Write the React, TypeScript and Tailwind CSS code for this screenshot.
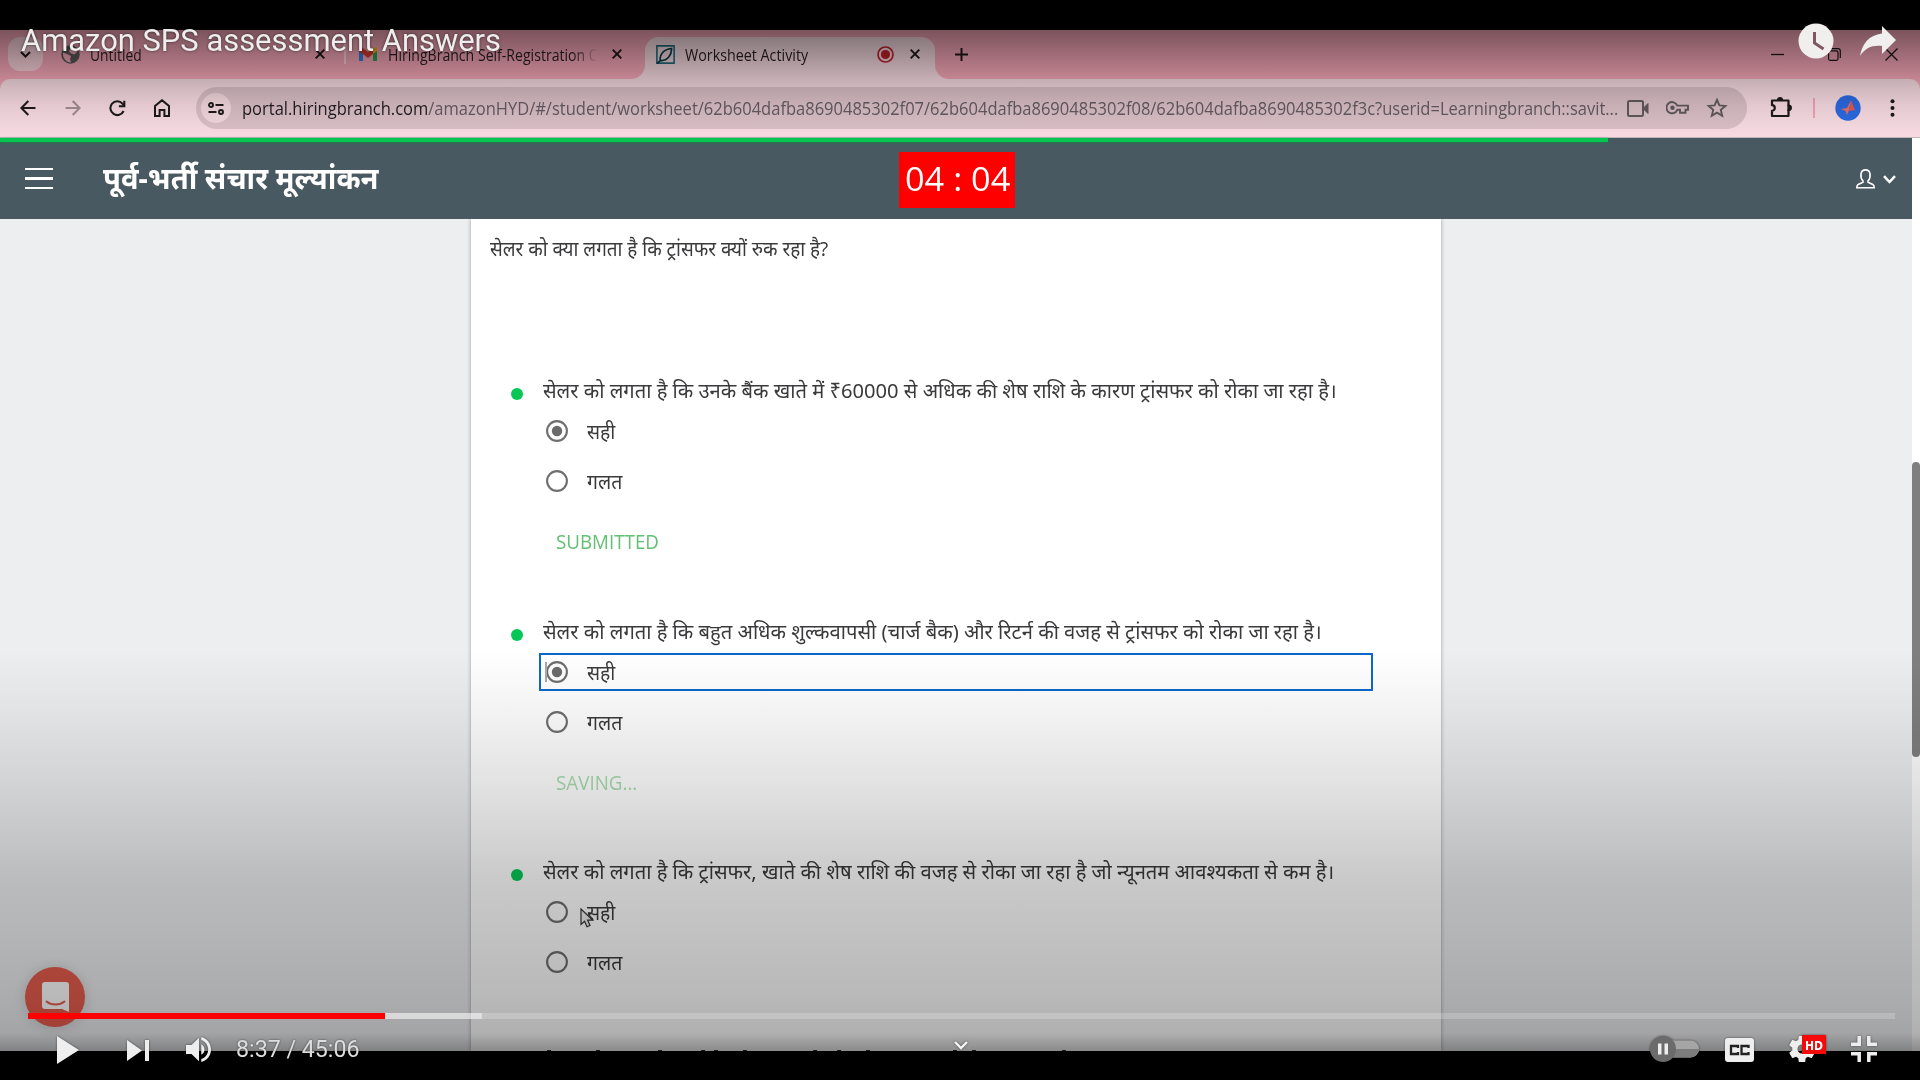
import { useLayoutEffect, useRef, useState } from "react";
import type { ReactNode } from "react";

/* One line of text stretched to a fixed advance width. */
function Fit({ w, className = "", children }: { w: number; className?: string; children: ReactNode }) {
  const ref = useRef<HTMLSpanElement>(null);
  const [scale, setScale] = useState(1);
  useLayoutEffect(() => {
    if (ref.current) setScale(w / ref.current.offsetWidth);
  }, [w]);
  return (
    <span className="block shrink-0" style={{ width: w }}>
      <span
        ref={ref}
        className={`inline-block origin-left whitespace-nowrap ${className}`}
        style={{ transform: `scaleX(${scale})` }}
      >
        {children}
      </span>
    </span>
  );
}

function Close({ className = "" }: { className?: string }) {
  return (
    <svg className={`size-[10px] shrink-0 ${className}`} viewBox="0 0 10 10" fill="none" stroke="#1d1518" strokeWidth="1.9">
      <path d="M.7.7l8.6 8.6M9.3.7L.7 9.3" />
    </svg>
  );
}

function TabStrip() {
  return (
    <div className="flex h-[49px] shrink-0 items-end bg-[#f8a8b9] font-['Open_Sans','Noto_Sans',sans-serif] text-[16.500px] text-[#2b2023]">
      <div className="mb-2 ml-2 flex h-[34px] w-[35px] items-center justify-center rounded-xl bg-[#fbd3dc]">
        <svg className="h-[7px] w-[11px]" viewBox="0 0 11 7" fill="none" stroke="#1d1518" strokeWidth="2"><path d="M1 1l4.500 4.500L10 1" /></svg>
      </div>
      <div className="ml-[18px] flex h-[42px] w-[283px] items-center pb-2">
        <svg className="mt-[1px] size-[19px] shrink-0" viewBox="0 0 19 19">
          <circle cx="9.500" cy="9.500" r="9.200" fill="#5b5759" />
          <path d="M10 2.500c3-.5 5.500 1.500 6.500 4l-3 3-3.500-1-2-2.500zM2 7.500l4 1.500 4 2-1 3 1 3.500C5 17.500 1.500 13 2 7.500z" fill="#f3a9b8" />
        </svg>
        <div className="ml-[10px] pt-[2px]"><Fit w={52}>Untitled</Fit></div>
        <Close className="ml-[173px]" />
      </div>
      <div className="mb-[15px] h-5 w-[2px] bg-[#fbd3dc]" />
      <div className="flex h-[42px] w-[299px] items-center pb-2 pl-[13px]">
        <svg className="h-[14px] w-[18px] shrink-0" viewBox="0 0 18 14">
          <path d="M0 2v12h4V5z" fill="#3f7be0" />
          <path d="M18 2v12h-4V5z" fill="#2f9e4f" />
          <path d="M14 1l4-1v4l-4 3z" fill="#f0b51f" />
          <path d="M0 0h2.500L9 5l5-4v6L9 11 0 4z" fill="#d93a30" />
        </svg>
        <div className="ml-[11px] w-[210px] overflow-hidden pt-[2px] [mask-image:linear-gradient(to_right,black_88%,transparent)]">
          <Fit w={210}>HiringBranch Self-Registration C</Fit>
        </div>
        <Close className="ml-[14px]" />
      </div>
      <div className="relative flex h-[42px] w-[290px] items-center rounded-t-[14px] bg-[#fadde4] pb-2 pl-[11px]">
        <svg className="absolute bottom-0 -left-[14px] size-[14px]" viewBox="0 0 14 14"><path d="M14 0v14H0A14 14 0 0 0 14 0z" fill="#fadde4" /></svg>
        <svg className="absolute -right-[14px] bottom-0 size-[14px]" viewBox="0 0 14 14"><path d="M0 0v14h14A14 14 0 0 1 0 0z" fill="#fadde4" /></svg>
        <svg className="size-[19px] shrink-0" viewBox="0 0 19 19" fill="none">
          <path d="M.9.900h17.200v17.200H.9z" stroke="#1f6e80" strokeWidth="1.600" />
          <path d="M4.500 15.500C3 11 7 4 15.500 3.500 16 10 11 16.500 4.500 15.500zM1 18.500l3.500-3" stroke="#0d3a47" strokeWidth="1.700" />
        </svg>
        <div className="ml-[10px] pt-[2px]"><Fit w={123}>Worksheet Activity</Fit></div>
        <svg className="ml-[69px] size-[17px] shrink-0" viewBox="0 0 17 17"><circle cx="8.500" cy="8.500" r="7.500" fill="none" stroke="#c8222a" strokeWidth="1.700" /><circle cx="8.500" cy="8.500" r="4.600" fill="#c8222a" /></svg>
        <Close className="ml-[16px]" />
      </div>
      <svg className="mb-[18px] ml-5 size-[13px]" viewBox="0 0 13 13" stroke="#1d1518" strokeWidth="1.900"><path d="M6.500 0v13M0 6.500h13" /></svg>
      <div className="mb-[18px] ml-auto flex items-center gap-[44px] pr-[22px]">
        <svg className="h-[14px] w-[13px]" viewBox="0 0 13 14" stroke="#1d1518" strokeWidth="1.300"><path d="M0 7.500h13" /></svg>
        <svg className="size-[13px]" viewBox="0 0 13 13" fill="none" stroke="#1d1518" strokeWidth="1.200"><rect x=".6" y="2.800" width="9.400" height="9.500" rx="1.500" /><path d="M3 .7h7a2.300 2.300 0 0 1 2.300 2.300v7" /></svg>
        <svg className="size-[13px]" viewBox="0 0 13 13" stroke="#1d1518" strokeWidth="1.300"><path d="M.5.500l12 12M12.500.500l-12 12" /></svg>
      </div>
    </div>
  );
}

function Toolbar() {
  return (
    <div className="shrink-0 bg-[#f8a8b9]">
      <div className="flex h-[58px] items-center rounded-t-[10px] bg-[#fadde4]">
        <svg className="ml-5 size-4" viewBox="0 0 16 16" fill="none" stroke="#1d1a1b" strokeWidth="2"><path d="M15.500 8H1.500M8.300 1L1.400 8l6.900 7" /></svg>
        <svg className="ml-[29px] size-4" viewBox="0 0 16 16" fill="none" stroke="#a68f96" strokeWidth="2"><path d="M.5 8h14M7.700 1l6.900 7-6.900 7" /></svg>
        <svg className="ml-[28px] size-[17px]" viewBox="0 0 17 17" fill="none" stroke="#1d1a1b" strokeWidth="2.100"><path d="M14.600 11A6.900 6.900 0 1 1 13.500 3.600L15 5.500" /><path d="M15.300.800v5.400H9.900" /></svg>
        <svg className="ml-[28px] h-[18px] w-4" viewBox="0 0 16 18" fill="none" stroke="#1d1a1b" strokeWidth="2"><path d="M1 7l7-5.800L15 7v10h-4.600v-6H5.600v6H1z" /></svg>
        <div className="ml-[26px] flex h-[42px] w-[1551px] items-center rounded-full bg-[#dcc1c8]">
          <div className="ml-[5px] flex size-[30px] shrink-0 items-center justify-center rounded-full bg-[#f5dae0]">
            <svg className="h-[13px] w-4" viewBox="0 0 16 13" fill="none" stroke="#1d1a1b" strokeWidth="1.900"><circle cx="3" cy="3" r="2" /><path d="M7.500 3H15.500M.5 10H8.500" /><circle cx="13" cy="10" r="2" /></svg>
          </div>
          <div className="ml-[11px] font-['Open_Sans','Noto_Sans',sans-serif] text-[18.500px] text-[#655b63]">
            <Fit w={1376}><span className="text-[#211d22]">portal.hiringbranch.com</span>/amazonHYD/#/student/worksheet/62b604dafba8690485302f07/62b604dafba8690485302f08/62b604dafba8690485302f3c?userid=Learningbranch::savit...</Fit>
          </div>
          <svg className="ml-[9px] h-[17px] w-[22px]" viewBox="0 0 22 17" fill="none" stroke="#625a5e" strokeWidth="2"><rect x="1" y="1" width="15" height="15" rx="1.500" /><path d="M17 7.500l4-4v10l-4-4z" fill="#625a5e" strokeWidth="1" /></svg>
          <svg className="ml-[17px] h-[14px] w-[23px]" viewBox="0 0 23 14" fill="none" stroke="#625a5e" strokeWidth="1.900"><path d="M11.300 4.600A5.600 5.600 0 1 0 11.300 8.800H14v3h5.500v-3H22V4.600z" /><circle cx="6.500" cy="6.700" r="1.300" fill="#625a5e" /></svg>
          <svg className="ml-[17px] size-[22px]" viewBox="0 0 22 22" fill="none" stroke="#625a5e" strokeWidth="1.900"><path d="M11 2.800l2.400 5.600 6 .5-4.600 4 1.400 5.900-5.200-3.100-5.200 3.100 1.400-5.900-4.600-4 6-.5z" /></svg>
        </div>
        <svg className="mb-[2px] ml-[23px] size-[22px]" viewBox="0 0 22 22" fill="none" stroke="#1d1a1b" strokeWidth="2.200"><path d="M2 4.500h16.500v5a2 2 0 0 1 0 4.500v6H2v-5.200a2.800 2.800 0 0 0 0-5.600z" strokeLinejoin="round" /><path d="M8 4a2 2 0 0 1 4 0zM18.500 9.800a1.800 1.800 0 0 1 0 4z" fill="#1d1a1b" /></svg>
        <div className="ml-[21px] h-5 w-[2px] bg-[#f5a4b7]" />
        <svg className="ml-[20px] size-[26px]" viewBox="0 0 26 26"><circle cx="13" cy="13" r="12.700" fill="#2b6be4" /><path d="M16 5l-2 10-2 5-1.500-4L6 14l6-1z" fill="#f07065" /><path d="M16 5l4 10-6 1z" fill="#e05a58" /></svg>
        <svg className="ml-[29px] h-[18px] w-[5px]" viewBox="0 0 5 18" fill="#1d1a1b"><circle cx="2.500" cy="2.200" r="2" /><circle cx="2.500" cy="9" r="2" /><circle cx="2.500" cy="15.800" r="2" /></svg>
      </div>
    </div>
  );
}

function AppHeader() {
  return (
    <header className="border-t border-[#c3b9bd]">
      <div className="flex h-[81px] w-[1912px] flex-col bg-[#495962]">
        <div className="h-[4px] w-[1608px] bg-[#05c653] shadow-[0_1px_3px_#1f7a4a]" />
        <div className="flex flex-1 items-center text-white">
          <div className="mb-[4px] ml-[25px] flex w-[28px] flex-col gap-[7px]">
            <i className="h-[2.500px] bg-white" /><i className="h-[2.500px] bg-white" /><i className="h-[2.500px] bg-white" />
          </div>
          <div className="mb-[5px] ml-[50px] w-[796px] font-['Noto_Sans',sans-serif] text-[30px] leading-[40px] font-bold">
            <Fit w={276}>पूर्व-भर्ती संचार मूल्यांकन</Fit>
          </div>
          <div className="mb-[1px] flex h-[56px] w-[116px] items-center justify-center bg-[#ff0000] pb-[2px] font-['Open_Sans',sans-serif] text-[33px]">
            <Fit w={105}>04 : 04</Fit>
          </div>
          <svg className="mb-[3px] ml-auto h-[20px] w-[19px]" viewBox="0 0 19 20" fill="none" stroke="#fff" strokeWidth="1.600"><path d="M7 12C5.200 10 4.600 7.500 5 4.800 5.400 2.300 7 .9 9.500.900s4.100 1.400 4.500 3.900c.4 2.700-.2 5.200-2 7.200v1.300l4.800 2.200c1 .5 1.400 1.600 1.400 3.200H.8c0-1.600.4-2.700 1.400-3.200L7 13.300z" /></svg>
          <svg className="mr-[16px] mb-[3px] ml-[8px] h-[9px] w-[13px]" viewBox="0 0 13 9" fill="none" stroke="#fff" strokeWidth="2.500"><path d="M1 1.200l5.500 5.800L12 1.200" /></svg>
        </div>
      </div>
    </header>
  );
}

function Option({ label, w, checked = false, focused = false }: { label: string; w: number; checked?: boolean; focused?: boolean }) {
  return (
    <div className={`relative -ml-[4px] flex h-[38px] w-[834px] items-center pl-[5px] ${focused ? "outline-2 -outline-offset-2 outline-[#0d67c9]" : ""}`}>
      {focused && <i className="absolute left-[6px] h-5 w-[2px] bg-[#aaa]" />}
      <svg className="ml-[2px] size-[22px]" viewBox="0 0 22 22"><circle cx="11" cy="11" r="9.900" fill="none" stroke="#6f6f6f" strokeWidth="2.100" />{checked && <circle cx="11" cy="11" r="5.200" fill="#6b6b6b" />}</svg>
      <div className="ml-[19px] pt-[2px]"><Fit w={w}>{label}</Fit></div>
    </div>
  );
}

type Item = { text: string; w: number; checked?: boolean; focused?: boolean; status?: string; statusW?: number; statusColor?: string };

const items: Item[] = [
  { text: "सेलर को लगता है कि उनके बैंक खाते में ₹60000 से अधिक की शेष राशि के कारण ट्रांसफर को रोका जा रहा है।", w: 794, checked: true, status: "SUBMITTED", statusW: 103, statusColor: "text-[#63c073]" },
  { text: "सेलर को लगता है कि बहुत अधिक शुल्कवापसी (चार्ज बैक) और रिटर्न की वजह से ट्रांसफर को रोका जा रहा है।", w: 779, checked: true, focused: true, status: "SAVING...", statusW: 81, statusColor: "text-[#a8dcae]" },
  { text: "सेलर को लगता है कि ट्रांसफर, खाते की शेष राशि की वजह से रोका जा रहा है जो न्यूनतम आवश्यकता से कम है।", w: 791 },
];

/* Horizontal centres of the vowel-sign tips that peek in at the bottom edge. */
const tips = [549, 598, 660, 703, 716, 745, 815, 839, 868, 955, 974, 1064];

function Question({ item }: { item: Item }) {
  return (
    <div className="flex h-[240.500px]">
      <i className="mt-[17px] mr-[20px] size-[12px] shrink-0 rounded-full bg-[#06c755]" />
      <div className="flex flex-col">
        <div className="h-[41px] leading-[40px]"><Fit w={item.w}>{item.text}</Fit></div>
        <Option label="सही" w={28} checked={item.checked} focused={item.focused} />
        <div className="h-[12px]" />
        <Option label="गलत" w={35} />
        {item.status && (
          <div className={`mt-[24px] ml-[13px] font-['Open_Sans',sans-serif] text-[19.500px] leading-[36px] ${item.statusColor}`}>
            <Fit w={item.statusW ?? 0}>{item.status}</Fit>
          </div>
        )}
      </div>
    </div>
  );
}

function Worksheet() {
  return (
    <div className="relative flex h-[832px] shrink-0 overflow-hidden bg-white">
      <main className="flex w-[1912px] justify-center bg-[#edeef0]">
        <div className="h-[832px] w-[970px] overflow-hidden bg-white pl-[19px] font-['Noto_Sans',sans-serif] text-[20px] text-[#3a3a3c] shadow-[0_0_4px_rgba(0,0,0,0.35)]">
          <div className="h-[152px] pt-[10px] leading-[40px]"><Fit w={338}>सेलर को क्या लगता है कि ट्रांसफर क्यों रुक रहा है?</Fit></div>
          <div className="pl-[21px]">
            {items.map((item) => <Question key={item.text} item={item} />)}
          </div>
        </div>
      </main>
      <div className="w-2 pt-[243px]"><div className="h-[295px] rounded-full bg-[#7f7f7f]" /></div>
      {tips.map((x) => <i key={x} className="absolute bottom-0 h-px w-[4px] bg-[#333]" style={{ left: x - 2 }} />)}
    </div>
  );
}

function PlayerOverlay() {
  return (
    <>
      <div className="absolute inset-x-0 top-[30px] h-[120px] bg-[linear-gradient(to_bottom,rgba(0,0,0,.5)_0px,rgba(0,0,0,.21)_49px,rgba(0,0,0,.09)_76px,rgba(0,0,0,.02)_102px,transparent_120px)]" />
      <div className="absolute inset-x-0 top-[650px] h-[401px] bg-[linear-gradient(to_bottom,transparent_0px,rgba(0,0,0,.04)_50px,rgba(0,0,0,.11)_130px,rgba(0,0,0,.21)_230px,rgba(0,0,0,.28)_350px,rgba(0,0,0,.31)_383px,rgba(0,0,0,.46)_401px)]" />
      <div className="absolute top-[12px] left-[21px] font-[Roboto,sans-serif] text-[32px] leading-[56px] text-[#eee] [text-shadow:0_0_3px_rgba(0,0,0,.6)]">
        <Fit w={480}>Amazon SPS assessment Answers</Fit>
      </div>
      <div className="absolute top-[23px] right-[24px] flex items-center gap-[26px]">
        <svg className="size-[36px]" viewBox="0 0 36 36"><circle cx="18" cy="18" r="17.500" fill="#f1eeee" /><path d="M16.500 9v11l9 6" fill="none" stroke="#80565f" strokeWidth="3" /></svg>
        <svg className="h-[30px] w-[36px]" viewBox="0 0 36 30"><path d="M22 0l14 14-14 14v-8C12 19 5 22 0 30 2 18 9 9 22 7.500z" fill="#f1eeee" /></svg>
      </div>
      <div className="absolute right-[25px] left-[28px] top-[1013px] flex h-[6px] bg-white/20">
        <div className="w-[357px] bg-[#ff0000]" />
        <div className="w-[97px] bg-white/45" />
      </div>
      <div className="absolute inset-x-0 top-[1030px] flex h-[38px] items-center text-[#eee] [filter:drop-shadow(0_0_1px_rgba(0,0,0,.5))]">
        <svg className="mt-[2px] ml-[57px] h-[28px] w-[22px]" viewBox="0 0 22 28" fill="#eee"><path d="M0 0l22 14L0 28z" /></svg>
        <svg className="mt-[2px] ml-[48px] h-[21px] w-[22px]" viewBox="0 0 22 21" fill="#eee"><path d="M0 0l15 10.500L0 21zM18 0h4v21h-4z" /></svg>
        <svg className="mt-[1px] ml-[37px] h-[25px] w-[25px]" viewBox="0 0 25 25" fill="#eee"><path d="M0 8h5.500L13 .8v23.400L5.500 17H0zM15.300 7.200c2 1 3.200 3 3.200 5.300s-1.200 4.300-3.200 5.300zM15.300 0C21 1.300 25 6.400 25 12.500S21 23.700 15.300 25v-2.900c4-1.300 6.900-5.100 6.900-9.600s-2.900-8.300-6.900-9.600z" /></svg>
        <div className="ml-[25px] font-[Roboto,sans-serif] text-[24.500px] leading-[38px] text-[#ddd]"><Fit w={124}>8:37 / 45:06</Fit></div>
        <svg className="mb-[7px] ml-[594px] h-[9px] w-[14px]" viewBox="0 0 14 9" fill="none" stroke="#f4f4f4" strokeWidth="2.400"><path d="M1 1l6 6 6-6" /></svg>
        <svg className="ml-auto h-[26px] w-[50px]" viewBox="0 0 50 26"><rect x="12" y="4.500" width="37" height="17" rx="8.500" fill="#a5a5a5" /><path d="M12 13h37a8.500 8.500 0 0 1-8.500 8.500H12z" fill="#7c7c7c" /><circle cx="13" cy="13" r="13" fill="#6b6b6b" /><path d="M8 7.500h3.500v11H8zM14.500 7.500H18v11h-3.500z" fill="#eee" /></svg>
        <svg className="mt-[1px] ml-[25px] h-[24px] w-[29px]" viewBox="0 0 29 24"><rect width="29" height="24" rx="3" fill="#eee" /><path d="M13 10V8H6v8h7v-2M23.500 10V8h-7v8h7v-2" fill="none" stroke="#222" strokeWidth="2.300" /></svg>
        <div className="relative ml-[35px] h-[28px] w-[37px]">
          <svg className="absolute top-[1px] left-0 size-[26px]" viewBox="2.200 2 19.600 20" fill="#eee"><path d="M19.430 12.980c.04-.32.07-.64.07-.98s-.03-.66-.07-.98l2.110-1.650c.19-.15.24-.42.12-.64l-2-3.460c-.12-.22-.39-.3-.61-.22l-2.490 1c-.52-.4-1.080-.73-1.690-.98l-.38-2.650A.488.488 0 0 0 14 2h-4c-.25 0-.46.180-.49.420l-.38 2.650c-.61.250-1.170.590-1.690.980l-2.490-1c-.23-.09-.49 0-.61.220l-2 3.460c-.13.220-.07.490.12.640l2.110 1.650c-.04.320-.07.650-.07.980s.03.660.07.980l-2.110 1.650c-.19.150-.24.420-.12.640l2 3.460c.12.220.39.300.61.220l2.490-1c.52.400 1.080.730 1.690.980l.38 2.650c.03.240.24.420.49.420h4c.25 0 .46-.18.490-.42l.38-2.650c.61-.25 1.170-.59 1.690-.98l2.490 1c.23.090.49 0 .61-.22l2-3.460c.12-.22.070-.49-.12-.64l-2.110-1.650zM12 15.500c-1.930 0-3.500-1.570-3.500-3.500s1.570-3.500 3.500-3.500 3.500 1.570 3.500 3.500-1.570 3.500-3.500 3.500z" /></svg>
          <div className="absolute top-0 right-0 flex h-[19px] w-[24px] items-center justify-center bg-[#f50a0a] pt-[3px] font-['DejaVu_Sans',sans-serif] text-[12px] leading-none font-bold text-white"><Fit w={18}>HD</Fit></div>
        </div>
        <svg className="mr-[43px] ml-[25px] h-[26px] w-[26px]" viewBox="0 0 26 26" fill="none" stroke="#eee" strokeWidth="3.500"><path d="M8.200 0v8.200H0M17.800 0v8.200H26M8.200 26v-8.200H0M17.800 26v-8.200H26" /></svg>
      </div>
    </>
  );
}

export default function App() {
  return (
    <div className="relative flex h-[1080px] w-[1920px] flex-col overflow-hidden bg-black pt-[30px]">
      <TabStrip />
      <Toolbar />
      <div className="shrink-0 bg-white"><AppHeader /></div>
      <Worksheet />
      <div className="absolute top-[967px] left-[25px] flex size-[60px] items-center justify-center rounded-full bg-[#e85d4e] shadow-[0_1px_14px_rgba(0,0,0,0.15)]">
        <svg className="h-[30px] w-[27px]" viewBox="0 0 27 30"><path d="M3 0h21a3 3 0 0 1 3 3v27l-7-3H3a3 3 0 0 1-3-3V3a3 3 0 0 1 3-3z" fill="#fff" /><path d="M4.500 19.500c5 4 13 4 18 0" fill="none" stroke="#e85d4e" strokeWidth="1.900" strokeLinecap="round" /></svg>
      </div>
      <svg className="absolute top-[908px] left-[580px] h-[20px] w-[14px]" viewBox="0 0 14 20"><path d="M1 1v15.500l3.600-3.300 2.400 5.600 3-1.300-2.400-5.400h5z" fill="#eee" stroke="#333" strokeWidth="1.200" /></svg>
      <PlayerOverlay />
    </div>
  );
}
